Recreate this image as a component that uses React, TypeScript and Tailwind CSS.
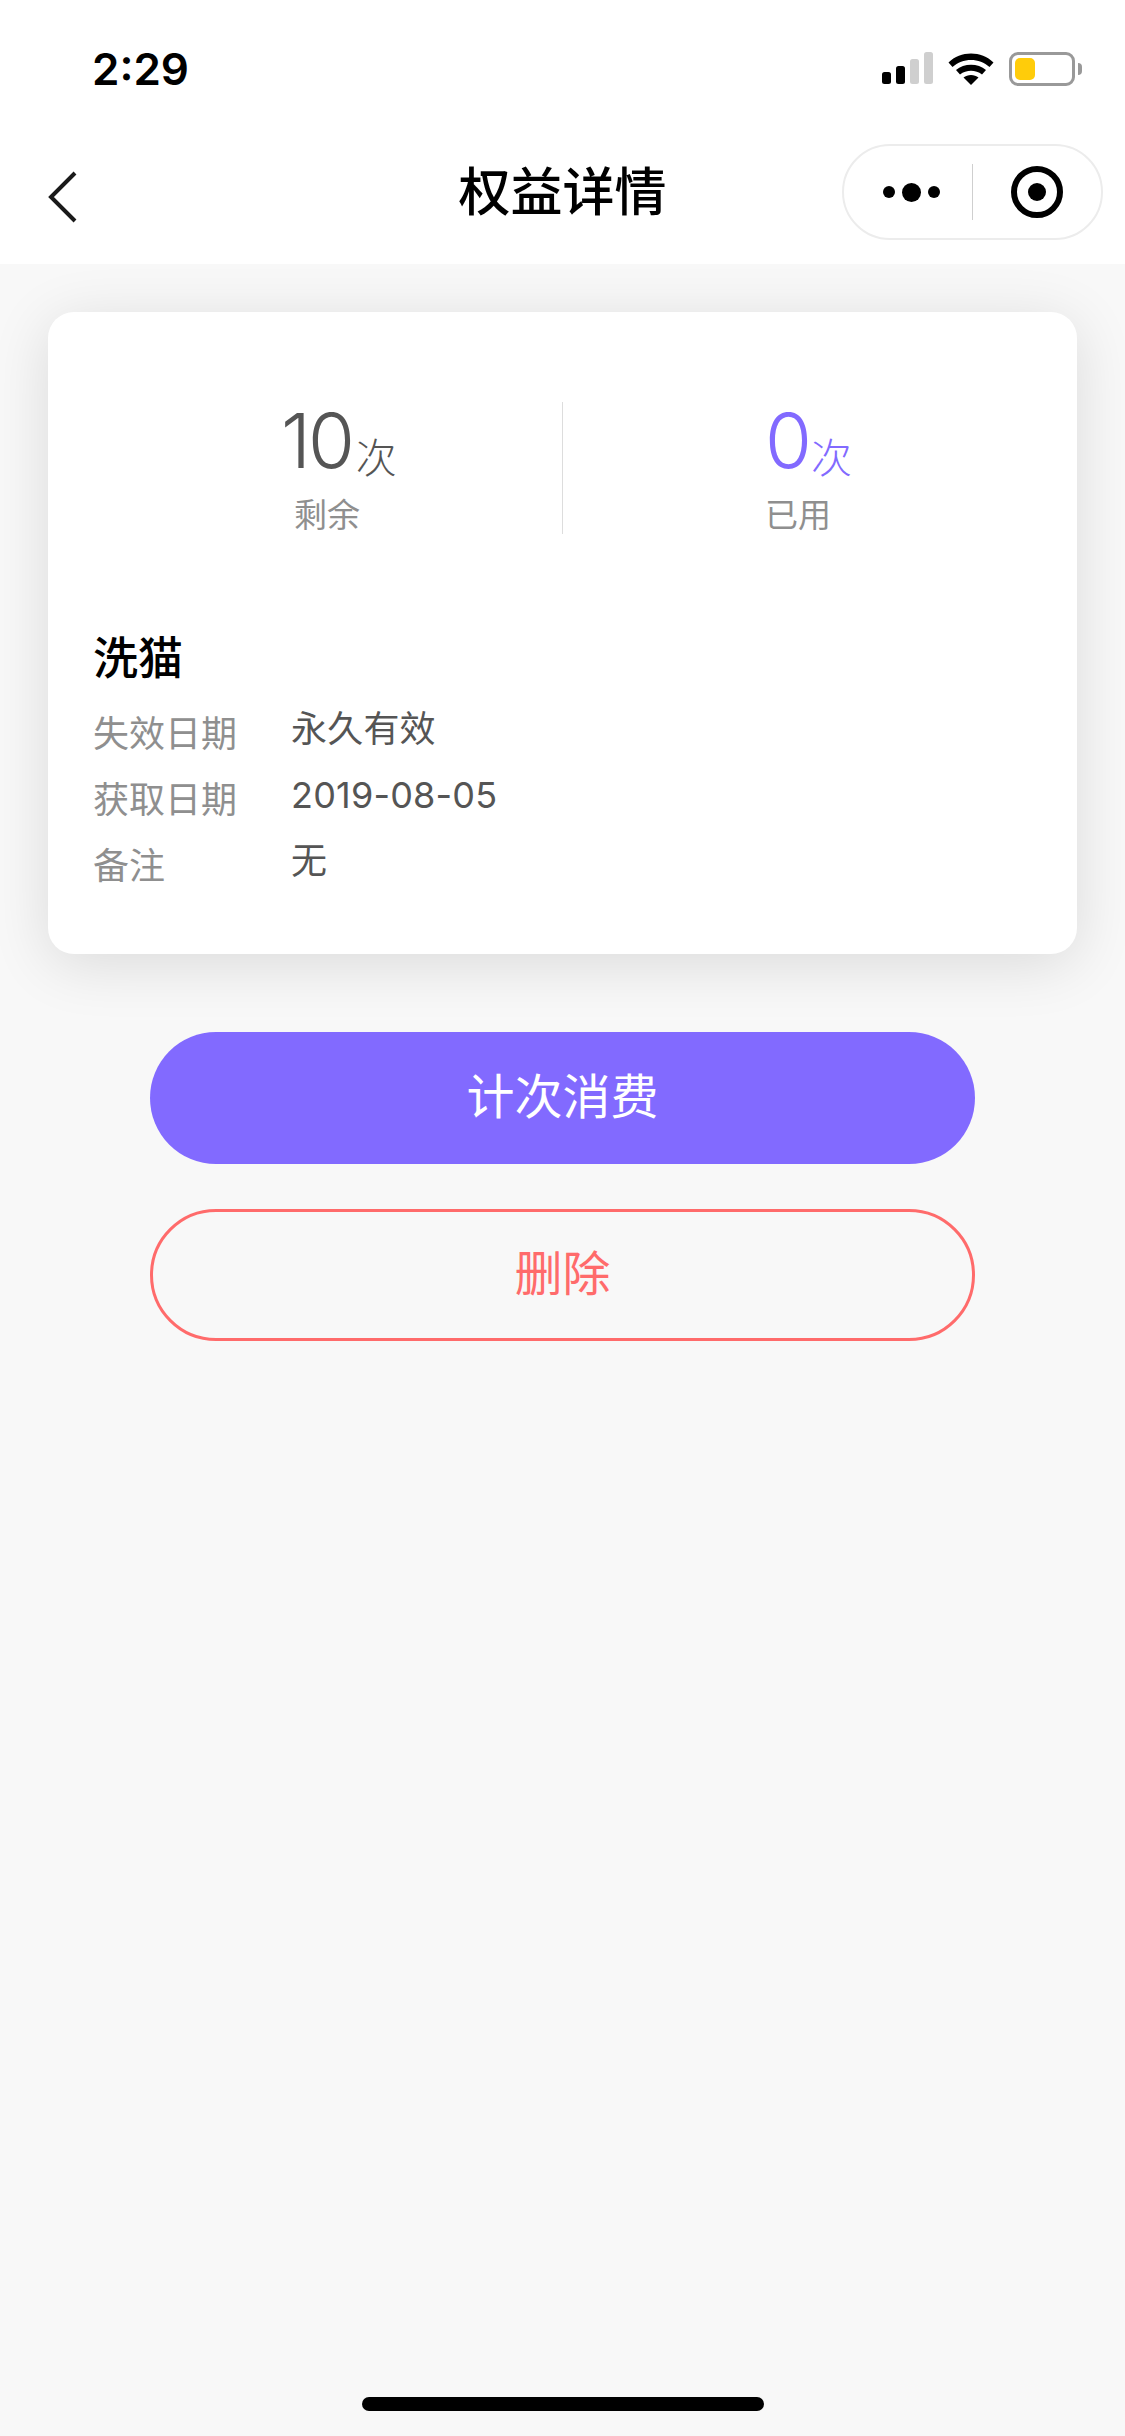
const font = { fontFamily: '"Inter", "Noto Sans CJK SC", sans-serif' };

function StatusIcons() {
  return (
    <div className="flex items-center">
      <svg width="52" height="34" viewBox="0 0 52 34" className="block">
        <rect x="0" y="20" width="9" height="12" rx="2.5" fill="#000" />
        <rect x="14" y="14" width="9" height="18" rx="2.5" fill="#000" />
        <rect x="28" y="7" width="9" height="25" rx="2.5" fill="#cfcfcf" />
        <rect x="42" y="0" width="9" height="32" rx="2.5" fill="#cfcfcf" />
      </svg>
      <svg width="46" height="34" viewBox="0 0 46 34" className="ml-[14px] block">
        <path d="M0.5 10.5C12.5 -1.5 33.5 -1.5 45.5 10.5L41.5 15C31.5 5.5 14.5 5.5 4.500 15Z" fill="#000" />
        <path d="M8 18C16 11 30 11 38 18L34 22.500C27.500 17.500 18.500 17.500 12 22.500Z" fill="#000" />
        <path d="M15.500 25.500C19.500 22 26.500 22 30.500 25.500L23 33Z" fill="#000" />
      </svg>
      <div className="ml-[15px] flex items-center">
        <div className="h-[34px] w-[66px] rounded-[9px] border-[3px] border-[#999999] p-[3px]">
          <div className="h-full w-[20px] rounded-[5px] bg-[#ffcc0a]" />
        </div>
        <div className="ml-[3px] h-[12px] w-[4px] rounded-r-full bg-[#999999]" />
      </div>
    </div>
  );
}

function Capsule() {
  return (
    <div className="flex h-[96px] w-[261px] items-center rounded-full border-2 border-[#ececec] bg-white">
      <div className="flex w-[128px] items-center justify-end gap-[7px] pr-[32px]">
        <span className="size-[12px] rounded-full bg-black" />
        <span className="size-[19px] rounded-full bg-black" />
        <span className="size-[12px] rounded-full bg-black" />
      </div>
      <div className="h-[56px] w-[1px] bg-[#cfcfcf]" />
      <div className="flex flex-1 justify-center">
        <svg width="52" height="52" viewBox="0 0 52 52" className="block">
          <circle cx="26" cy="26" r="23" fill="none" stroke="#000" strokeWidth="6" />
          <circle cx="26" cy="26" r="9" fill="#000" />
        </svg>
      </div>
    </div>
  );
}

function Stat({ value, label, color, pad, labelPad, gap }: { value: string; label: string; color: string; pad: string; labelPad: string; gap: string }) {
  return (
    <div className={`flex w-[514px] flex-col items-start ${pad}`}>
      <div className={`flex items-end leading-none ${color}`}>
        <span className="text-[76px] font-light leading-[76px] tracking-[-3px]">{value}</span>
        <span className={`translate-y-[2px] text-[41px] font-light leading-[44px] ${gap}`}>次</span>
      </div>
      <div className={`mt-[15px] text-[33px] leading-[44px] text-[#8f8f8f] ${labelPad}`}>{label}</div>
    </div>
  );
}

function Row({ label, value }: { label: string; value: string }) {
  return (
    <div className="flex h-[66px]">
      <div className="w-[198px] pt-[5px] text-[36px] leading-[50px] text-[#8f8f8f]">{label}</div>
      <div className="text-[36px] leading-[50px] tracking-[0.2px] text-[#555555]">{value}</div>
    </div>
  );
}

export default function App() {
  return (
    <div className="flex min-h-[2436px] w-[1125px] flex-col overflow-hidden bg-[#f8f8f8]" style={font}>
      <header className="bg-white">
        <div className="flex h-[132px] items-start justify-between pl-[92px] pr-[43px] pt-[52px]">
          <span className="text-[44px] font-semibold leading-[34px] text-black">2:29</span>
          <StatusIcons />
        </div>
        <div className="relative flex h-[132px] items-center justify-between pb-[12px] pl-[48px] pr-[22px]">
          <svg width="30" height="52" viewBox="0 0 30 52" className="mt-[10px] block">
            <path d="M27 2L3 26L27 50" fill="none" stroke="#1a1a1a" strokeWidth="4" />
          </svg>
          <h1 className="absolute inset-x-0 top-[25px] text-center text-[52px] font-medium leading-[72px] text-black">权益详情</h1>
          <Capsule />
        </div>
      </header>

      <main className="flex flex-col items-center pt-[48px]">
        <section className="h-[642px] w-[1029px] rounded-[26px] bg-white pt-[90px] shadow-[0_10px_60px_rgba(0,0,0,0.12)]">
          <div className="relative flex h-[132px]">
            <Stat value="10" label="剩余" color="text-[#555555]" pad="pl-[233px]" labelPad="pl-[13px]" gap="ml-[4px]" />
            <div className="h-[132px] w-[1px] bg-[#dddddd]" />
            <Stat value="0" label="已用" color="text-[#826aff]" pad="pl-[202px]" labelPad="" gap="ml-[2px]" />
          </div>
          <div className="px-[45px] pt-[94px]">
            <div className="text-[45px] font-medium leading-[62px] text-black">洗猫</div>
            <div className="mt-[14px]">
              <Row label="失效日期" value="永久有效" />
              <Row label="获取日期" value="2019-08-05" />
              <Row label="备注" value="无" />
            </div>
          </div>
        </section>

        <button className="mt-[78px] h-[132px] w-[825px] rounded-full bg-[#826aff] pb-[2px] text-[48px] text-white">计次消费</button>
        <button className="mt-[45px] h-[132px] w-[825px] rounded-full border-[3px] border-[#ff6b6b] pb-[2px] text-[48px] text-[#ff6b6b]">删除</button>
      </main>

      <div className="mt-auto flex justify-center pb-[25px]">
        <div className="h-[14px] w-[402px] rounded-full bg-black" />
      </div>
    </div>
  );
}
